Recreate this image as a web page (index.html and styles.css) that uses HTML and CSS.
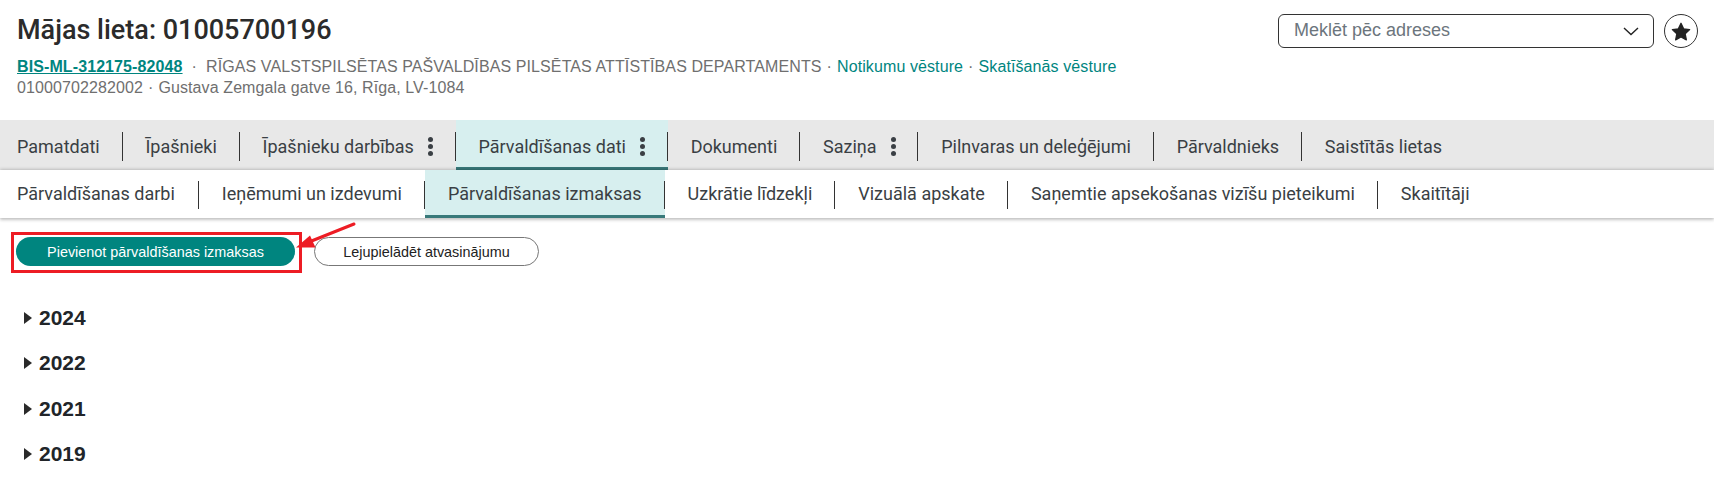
FILE: index.html
```html
<!DOCTYPE html>
<html lang="lv">
<head>
<meta charset="utf-8">
<title>Mājas lieta</title>
<link rel="stylesheet" href="styles.css">
</head>
<body>
<header class="head">
  <div class="head-info">
    <h1 class="title">Mājas lieta: 01005700196</h1>
    <p class="meta"><a class="case-link" href="#">BIS-ML-312175-82048</a><span class="dot-wide">·</span>RĪGAS VALSTSPILSĒTAS PAŠVALDĪBAS PILSĒTAS ATTĪSTĪBAS DEPARTAMENTS<span class="dot">·</span><a class="link" href="#">Notikumu vēsture</a><span class="dot">·</span><a class="link" href="#">Skatīšanās vēsture</a></p>
    <p class="meta">01000702282002<span class="dot">·</span>Gustava Zemgala gatve 16, Rīga, LV-1084</p>
  </div>
  <div class="head-tools">
    <div class="search"><span class="search-text">Meklēt pēc adreses</span>
      <svg class="chev" width="16" height="9" viewBox="0 0 16 9"><path d="M1 1l7 6.5L15 1" fill="none" stroke="#222" stroke-width="1.4"/></svg>
    </div>
    <div class="fav">
      <svg width="20" height="19" viewBox="0 0 24 23"><path d="M12 1.5l3.2 6.8 7.3.9-5.4 5.1 1.4 7.3L12 18l-6.5 3.6 1.4-7.3L1.500 9.200l7.300-.9z" fill="#222" stroke="#222" stroke-width="1.500" stroke-linejoin="round"/></svg>
    </div>
  </div>
</header>

<nav class="tabs">
  <a class="tab first">Pamatdati</a>
  <a class="tab">Īpašnieki</a>
  <a class="tab">Īpašnieku darbības<i class="more"></i></a>
  <a class="tab active">Pārvaldīšanas dati<i class="more"></i></a>
  <a class="tab">Dokumenti</a>
  <a class="tab">Saziņa<i class="more"></i></a>
  <a class="tab">Pilnvaras un deleģējumi</a>
  <a class="tab">Pārvaldnieks</a>
  <a class="tab last">Saistītās lietas</a>
</nav>
<nav class="tabs sub">
  <a class="tab first">Pārvaldīšanas darbi</a>
  <a class="tab">Ieņēmumi un izdevumi</a>
  <a class="tab active">Pārvaldīšanas izmaksas</a>
  <a class="tab">Uzkrātie līdzekļi</a>
  <a class="tab">Vizuālā apskate</a>
  <a class="tab">Saņemtie apsekošanas vizīšu pieteikumi</a>
  <a class="tab last">Skaitītāji</a>
</nav>

<div class="actions">
  <button class="btn primary">Pievienot pārvaldīšanas izmaksas</button>
  <button class="btn ghost">Lejupielādēt atvasinājumu</button>
  <div class="mark"></div>
  <svg class="arrow" width="70" height="32" viewBox="0 0 70 32"><path d="M59 2L14 20" fill="none" stroke="#ed1c24" stroke-width="3" stroke-linecap="round"/><path d="M1 25.500l14-12 5.500 12z" fill="#ed1c24"/></svg>
</div>

<ul class="years">
  <li class="year">2024</li>
  <li class="year">2022</li>
  <li class="year">2021</li>
  <li class="year">2019</li>
</ul>
</body>
</html>
```
FILE: styles.css
```css
* { box-sizing: border-box; }
html, body { margin: 0; height: 484px; overflow: hidden; background: #fff; }
body { font-family: "Liberation Sans", Arial, sans-serif; color: #212529; }

.head { display: flex; justify-content: space-between; height: 120px; padding: 14px 16px 0 17px; }
.title { margin: 0 0 10px; font: 500 27px/32px Roboto, sans-serif; color: #2b2b2b; }
.meta { margin: 0; font-size: 16px; line-height: 21px; letter-spacing: .1px; color: #6f6f6f; white-space: nowrap; }
.case-link { color: #00857f; font-weight: 700; text-decoration: underline; }
.link { color: #00857f; text-decoration: none; }
.dot { margin: 0 5px; }
.dot-wide { margin: 0 9px; }

.head-tools { display: flex; align-items: flex-start; gap: 10px; }
.search { display: flex; align-items: center; justify-content: space-between; width: 376px; height: 34px; padding: 0 14px 0 15px; border: 1px solid #333; border-radius: 6px; font-size: 18px; color: #6c757d; }
.search-text { margin-top: -2px; }
.fav { display: flex; align-items: center; justify-content: center; width: 34px; height: 34px; border: 1px solid #333; border-radius: 50%; }

.tabs { display: flex; height: 50px; background: #e8e8e8; font: 400 18px/1 Roboto, sans-serif; color: #3a3f44; }
.tabs.sub { height: 48px; background: #fff; box-shadow: 0 2px 3px rgba(0,0,0,.22), 0 -1px 3px rgba(0,0,0,.18); position: relative; }
.tab { position: relative; display: flex; align-items: center; padding: 3px 22.85px 0; }
.tabs.sub .tab { padding: 0 23px; }
.tab::after { content: ""; position: absolute; right: 0; top: 12px; bottom: 9px; width: 1px; background: #333; }
.tabs.sub .tab::after { top: 11px; }
.tab.first { padding-left: 17px; }
.tabs.sub .tab.first { padding: 0 24px 0 17px; }
.tab.last::after { display: none; }
.tab.active { background: #d7efef; box-shadow: inset 0 -3px 0 #38797a; }
.more { display: block; width: 5px; height: 5px; margin: 0 0 0 14px; border-radius: 50%; background: #3a3f44; box-shadow: 0 -7px 0 #3a3f44, 0 7px 0 #3a3f44; }

.actions { position: relative; display: flex; gap: 19px; padding: 19px 0 0 16px; }
.btn { height: 29px; border-radius: 15px; font: 14.4px "Liberation Sans", Arial, sans-serif; }
.primary { width: 279px; border: 0; background: #00857f; color: #fff; }
.ghost { width: 225px; border: 1px solid #777; background: #fff; color: #222; }
.mark { position: absolute; left: 11px; top: 14px; width: 291px; height: 41px; border: 3px solid #ed1c24; }
.arrow { position: absolute; left: 295px; top: 4px; }

.years { list-style: none; margin: 0; padding: 40px 0 0 39px; }
.year { position: relative; height: 45.3px; font-size: 21px; font-weight: 700; line-height: 24px; color: #212529; }
.year::before { content: ""; position: absolute; left: -15px; top: 6px; border-left: 8px solid #2a2a2a; border-top: 6px solid transparent; border-bottom: 6px solid transparent; }
```
